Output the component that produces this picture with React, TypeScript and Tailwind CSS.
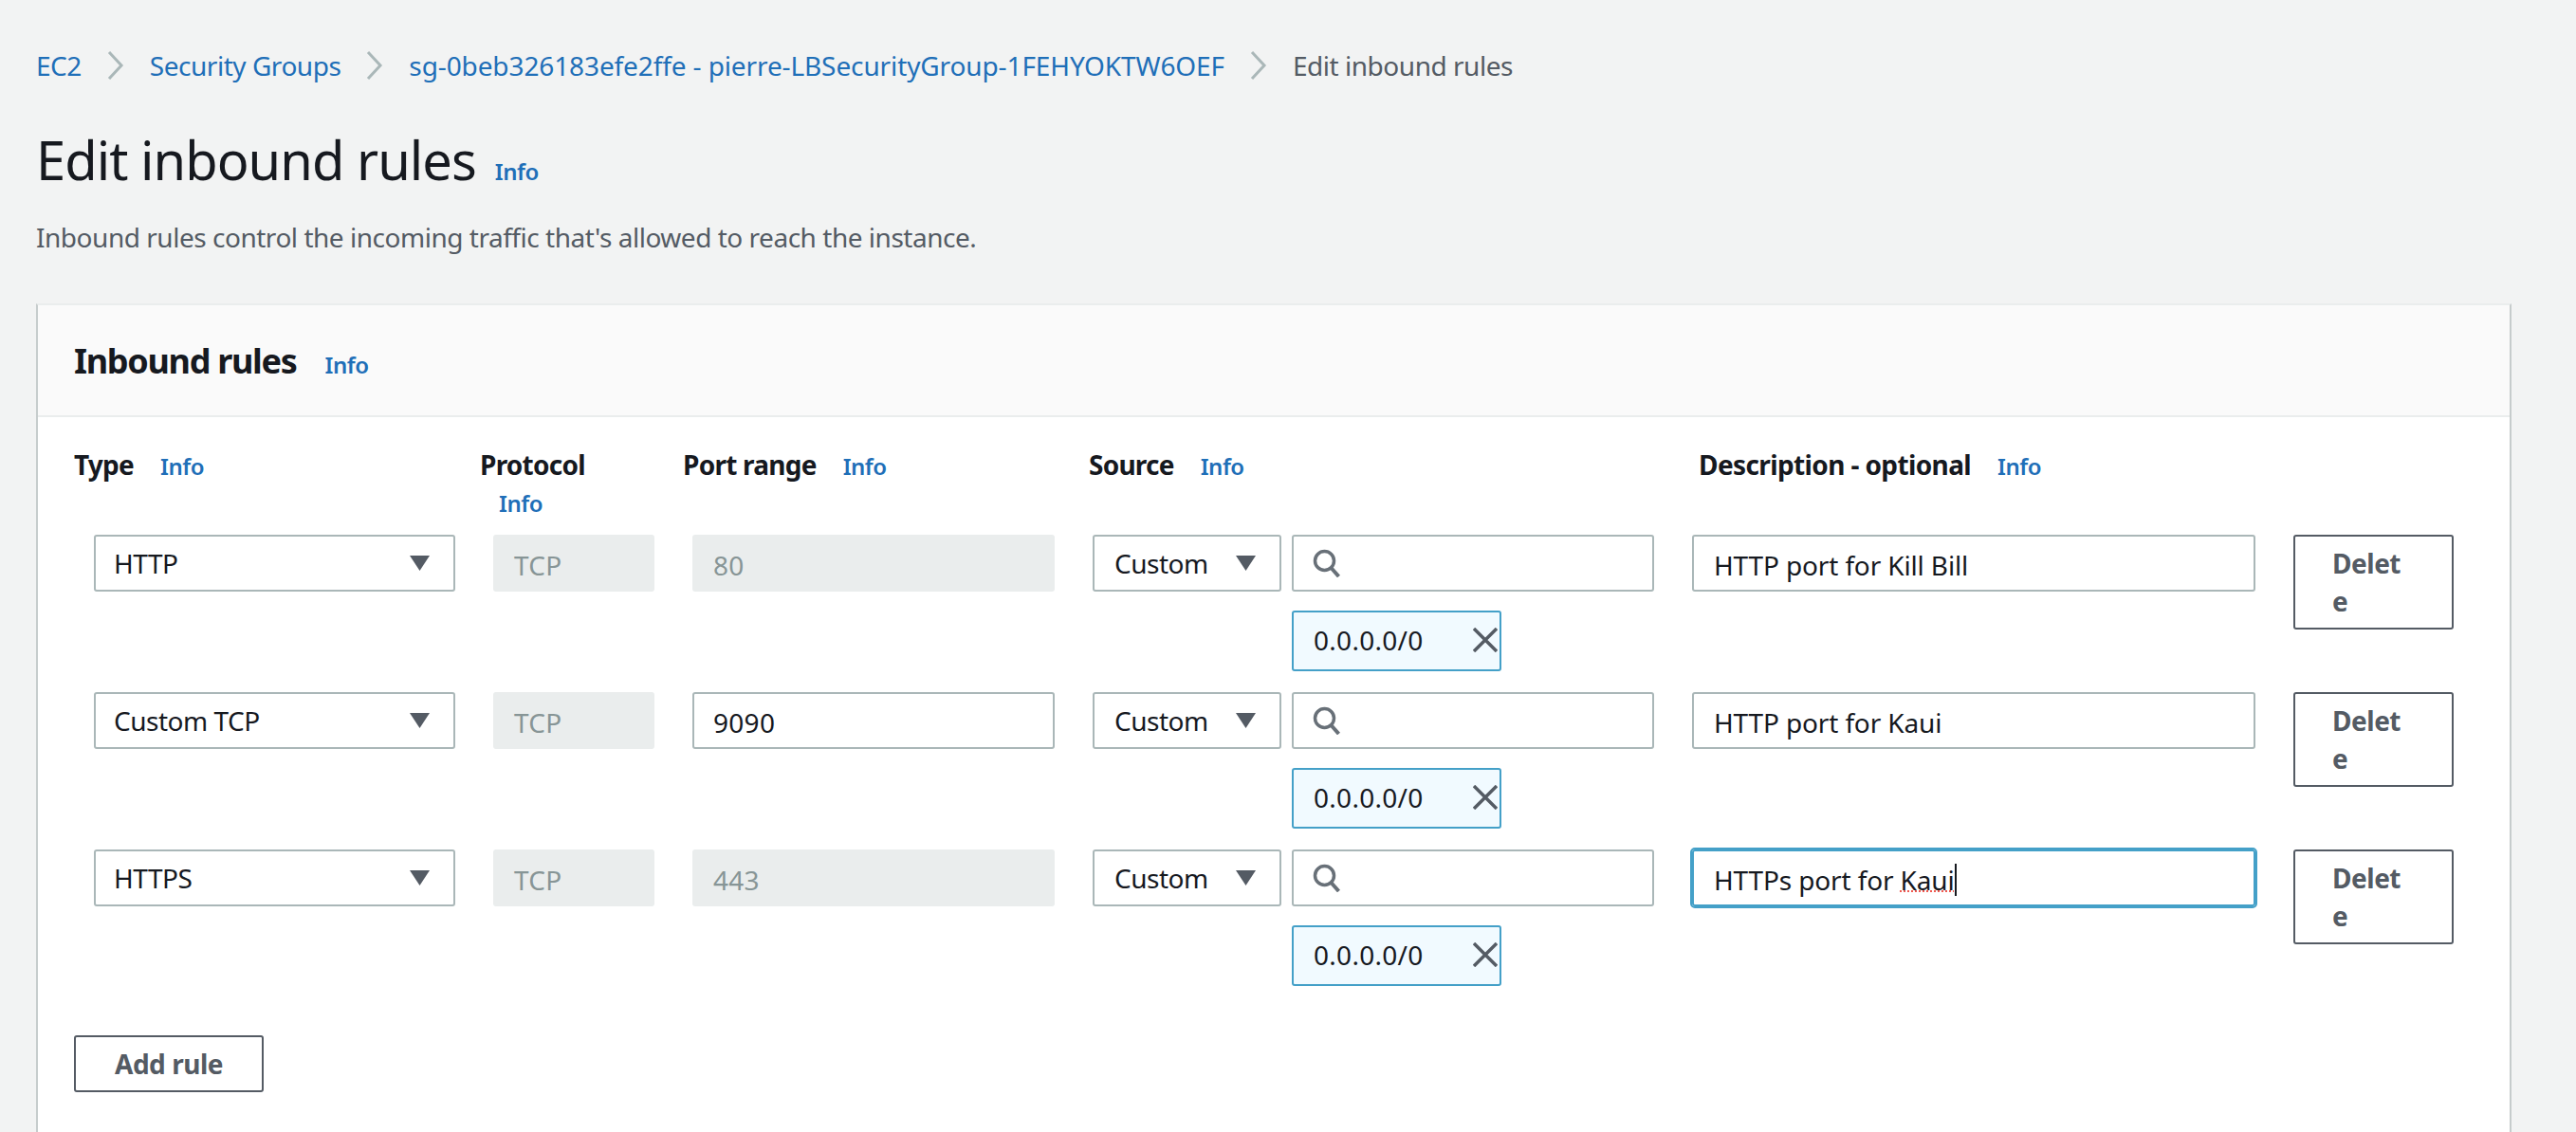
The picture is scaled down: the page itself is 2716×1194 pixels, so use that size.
const rows = [
  { type: "HTTP", port: "80", portDisabled: true, desc: "HTTP port for Kill Bill" },
  { type: "Custom TCP", port: "9090", portDisabled: false, desc: "HTTP port for Kaui" },
  { type: "HTTPS", port: "443", portDisabled: true, desc: "HTTPs port for ", focused: true },
];

function Info({ className = "" }: { className?: string }) {
  return <a className={`text-[24px] leading-[32px] font-semibold tracking-[-0.02em] text-[#1f6fb8] ${className}`}>Info</a>;
}

function Chevron() {
  return (
    <svg width="18" height="30" viewBox="0 0 18 30" fill="none" className="shrink-0">
      <path d="M2 1l13 14L2 29" stroke="#aab7b8" strokeWidth="3" />
    </svg>
  );
}

function Caret() {
  return (
    <svg width="21" height="16" viewBox="0 0 21 16" className="shrink-0">
      <path d="M0 0h21L10.5 16z" fill="#545b64" />
    </svg>
  );
}

function SearchIcon() {
  return (
    <svg width="30" height="30" viewBox="0 0 30 30" fill="none" className="shrink-0">
      <circle cx="12.5" cy="12.5" r="10" stroke="#687078" strokeWidth="3.5" />
      <path d="M19.5 20l8 9" stroke="#687078" strokeWidth="4" />
    </svg>
  );
}

function CloseIcon() {
  return (
    <svg width="26" height="26" viewBox="0 0 26 26" fill="none" className="shrink-0">
      <path d="M1 1l24 24M25 1L1 25" stroke="#545b64" strokeWidth="3.5" />
    </svg>
  );
}

function Select({ label, className = "" }: { label: string; className?: string }) {
  return (
    <div className={`flex h-[60px] items-center justify-between rounded-[3px] border-2 border-[#aab7b8] bg-white pr-[25px] text-[#16191f] ${className}`}>
      <span>{label}</span>
      <Caret />
    </div>
  );
}

function Disabled({ value, className = "" }: { value: string; className?: string }) {
  return (
    <div className={`flex h-[60px] items-center rounded-[3px] bg-[#eaeded] px-[22px] pt-[3px] tracking-[0.01em] text-[#879596] ${className}`}>{value}</div>
  );
}

function DeleteButton() {
  return (
    <button className="h-[100px] w-[169px] rounded-[3px] border-2 border-[#545b64] bg-white pl-[39px] pr-[48px] text-left font-bold leading-[40px] break-all text-[#545b64]">
      Delete
    </button>
  );
}

export default function App() {
  return (
    <div className="h-[1194px] overflow-hidden bg-[#f2f3f3] pl-[38px] pr-[68px] pt-[49px] text-[28px] tracking-[-0.017em] text-[#16191f] font-['Noto_Sans',sans-serif]">
      <nav className="flex h-[40px] items-center gap-[27px] text-[#1f6fb8] leading-[40px]">
        <a>EC2</a>
        <Chevron />
        <a>Security Groups</a>
        <Chevron />
        <a className="tracking-[-0.004em]">sg-0beb326183efe2ffe - pierre-LBSecurityGroup-1FEHYOKTW6OEF</a>
        <Chevron />
        <span className="text-[#545b64]">Edit inbound rules</span>
      </nav>

      <div className="mt-[44px] flex items-baseline gap-[20px]">
        <h1 className="text-[56px] leading-[70px] font-normal tracking-[-0.017em]">Edit inbound rules</h1>
        <Info />
      </div>
      <p className="mt-[27px] leading-[40px] text-[#545b64]">Inbound rules control the incoming traffic that's allowed to reach the instance.</p>

      <section className="mt-[50px] h-[960px] border-x-2 border-x-[#c6cccc] border-t-2 border-t-[#eaeded] bg-white">
        <header className="flex h-[118px] items-center border-b-2 border-[#eaeded] bg-[#fafafa] pl-[38px] pt-[2px]">
          <div className="flex items-baseline gap-[30px]">
            <h2 className="text-[36px] leading-[46px] font-bold tracking-[-0.036em]">Inbound rules</h2>
            <Info />
          </div>
        </header>

        <div className="pl-[38px] pt-[30px]">
          <div className="grid h-[94px] grid-cols-[428px_214px_428px_643px_1fr] font-bold leading-[40px] tracking-[-0.027em]">
            <div className="flex items-baseline gap-[28px]">
              <span>Type</span>
              <Info />
            </div>
            <div>
              <div>Protocol</div>
              <Info className="ml-[20px] mt-[5px] block" />
            </div>
            <div className="flex items-baseline gap-[28px]">
              <span>Port range</span>
              <Info />
            </div>
            <div className="flex items-baseline gap-[28px]">
              <span>Source</span>
              <Info />
            </div>
            <div className="flex items-baseline gap-[28px]">
              <span className="tracking-[-0.022em]">Description - optional</span>
              <Info />
            </div>
          </div>

          {rows.map((row) => (
            <div key={row.type} className="flex h-[166px] items-start pl-[21px]">
              <Select label={row.type} className="w-[381px] pl-[19px]" />
              <Disabled value="TCP" className="ml-[40px] w-[170px]" />
              {row.portDisabled ? (
                <Disabled value={row.port} className="ml-[40px] w-[382px]" />
              ) : (
                <div className="ml-[40px] flex h-[60px] w-[382px] items-center rounded-[3px] border-2 border-[#aab7b8] bg-white px-[20px] pt-[3px] tracking-[0.01em]">{row.port}</div>
              )}
              <Select label="Custom" className="ml-[40px] w-[199px] pl-[21px]" />
              <div className="ml-[11px] w-[382px]">
                <div className="flex h-[60px] items-center rounded-[3px] border-2 border-[#aab7b8] bg-white pl-[20px]">
                  <SearchIcon />
                </div>
                <div className="mt-[20px] flex h-[64px] w-[221px] items-center justify-between rounded-[3px] border-2 border-[#44a0c8] bg-[#f1faff] pb-[2px] pl-[21px] pr-[2px]">
                  <span className="tracking-[0.01em]">0.0.0.0/0</span>
                  <CloseIcon />
                </div>
              </div>
              {row.focused ? (
                <div className="ml-[40px] flex h-[60px] w-[594px] items-center rounded-[3px] border-2 border-[#44a0c8] bg-white px-[21px] pt-[3px] tracking-[-0.005em] outline-2 outline-[#44a0c8]">
                  <span className="whitespace-pre">{row.desc}</span>
                  <span className="underline decoration-dotted decoration-[#f0584f] decoration-2">Kaui</span>
                  <span className="h-[34px] w-[2px] bg-[#16191f]" />
                </div>
              ) : (
                <div className="ml-[40px] flex h-[60px] w-[594px] items-center rounded-[3px] border-2 border-[#aab7b8] bg-white px-[21px] pt-[3px] tracking-[-0.005em]">{row.desc}</div>
              )}
              <div className="ml-[40px]">
                <DeleteButton />
              </div>
            </div>
          ))}

          <button className="mt-[30px] h-[60px] w-[200px] rounded-[3px] border-2 border-[#545b64] bg-white text-center font-bold text-[#545b64]">
            Add rule
          </button>
        </div>
      </section>
    </div>
  );
}
